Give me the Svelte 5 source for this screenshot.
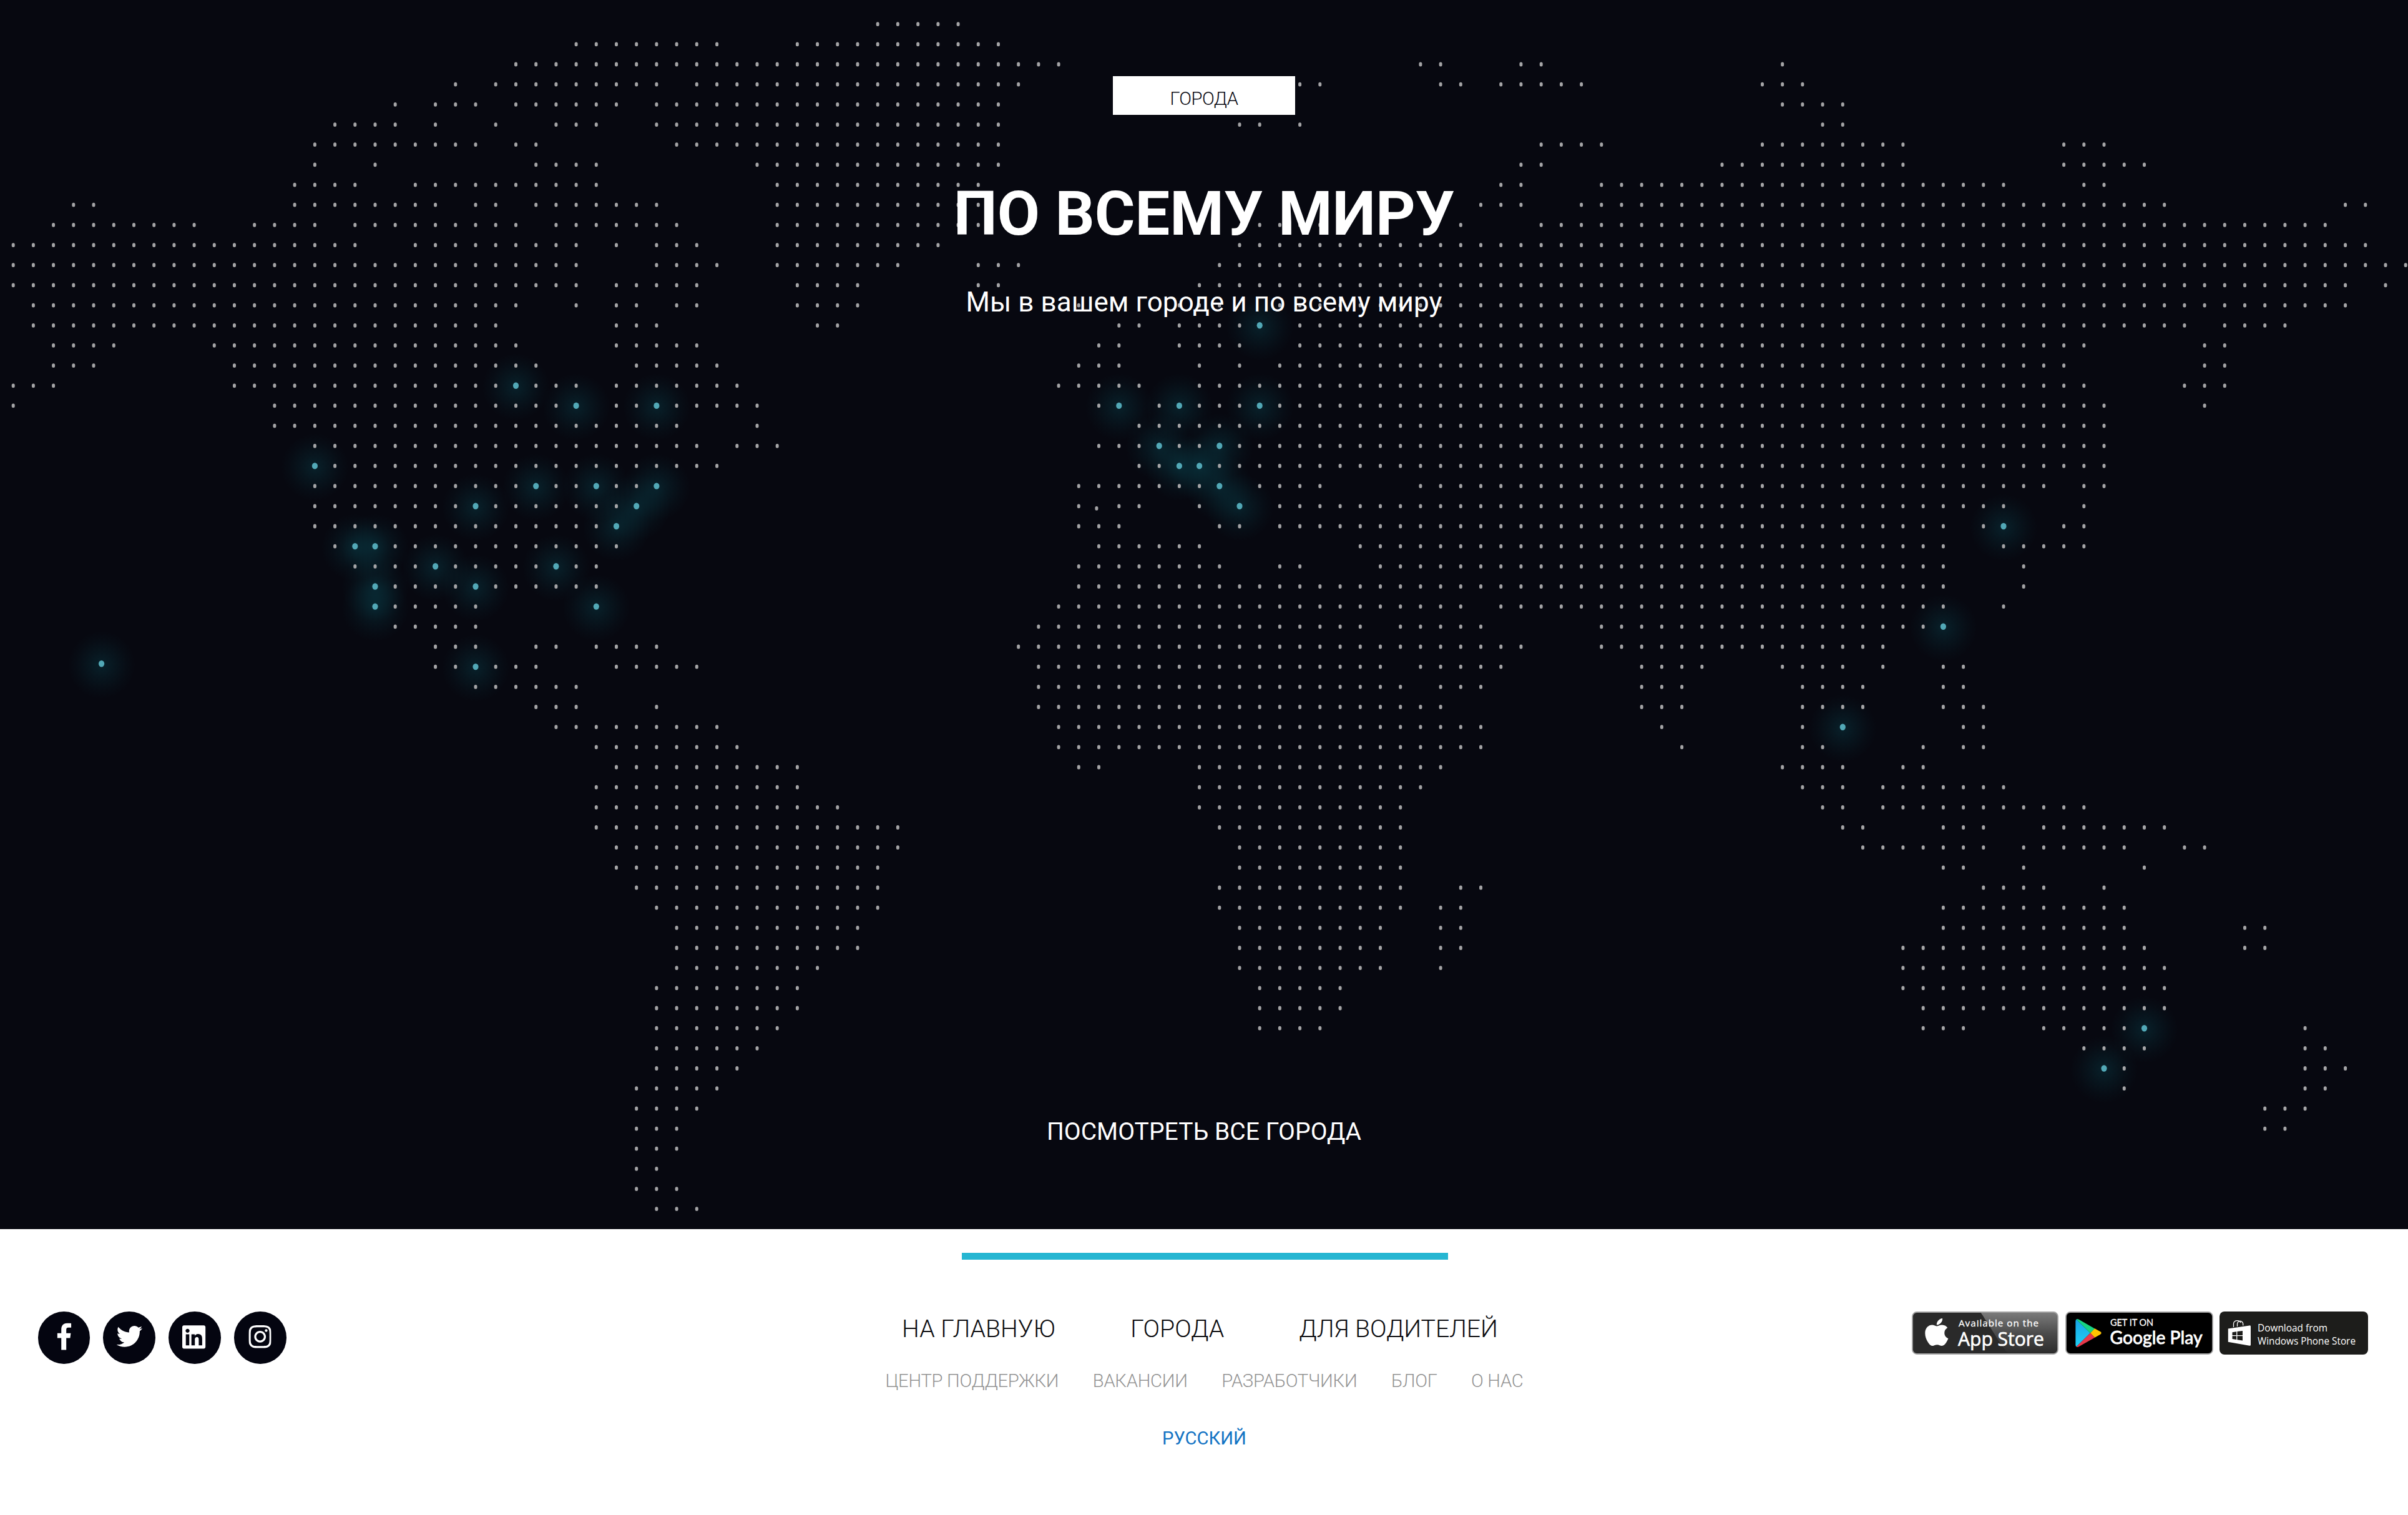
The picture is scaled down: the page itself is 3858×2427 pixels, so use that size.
<script>
  // Columns occupied by a dot in each row of the map grid, as inclusive runs.
  const rows = [
    '43-47',
    '28-35 39-49',
    '25-52 70-71 75-76 88',
    '22 24-32 34-50 64-65 71-72 74-78 87-89',
    '19 21-23 25-30 32-49 88-91',
    '16-19 21 24 27-29 32-49 61-62 64 90-91',
    '15-23 25-26 33-49 76-79 87-94 102-104',
    '15 18 26-29 37-49 75-76 85-94 102-106',
    '14-17 20-29 38-48 74-75 79-99 103-104',
    '3-4 14-21 23-24 26-32 38-48 73-75 78-107 116-117',
    '2-9 12-15 17-25 27-33 38-48 62-65 72 76-115',
    '0-17 20-28 30 32-34 38-46 61-117',
    '0-28 32-35 38-44 48-50 60-119',
    '0-28 30-34 39-42 48-49 59-116 118',
    '1-25 28 30-31 33-34 39-42 53 58-60 63-116',
    '1-24 30-32 40-41 55-56 58-61 64-108 110-113',
    '2-5 10-25 30-34 54-55 58-61 64-103 109-110',
    '2-4 11-26 31-35 53-55 59 61 63-102 109-110',
    '0-2 11-28 30-36 52-56 59-103 108-110',
    '0 13-28 30-37 54-55 57-104 109',
    '13-33 37 56-104',
    '15-34 36-38 54-104',
    '15-35 56-104',
    '15-32 53-60 62-65 70-101 103-104',
    '15-31 53 55-56 59 61 63-99 103',
    '15-30 53-55 60-61 63-96 98-99 102-103',
    '16-30 54-59 67-96 99-103',
    '17-29 53-60 63-64 68-96 100',
    '18-29 53-96 100',
    '18-23 29 52-72 74-96 99',
    '19-23 51-67 69-73 79-96',
    '21-23 26-27 29-32 50-75 79-93',
    '21-26 30-34 51-68 70-74 81-84 88-91 93 96-97',
    '23-28 51-69 71-73 81-83 89-92 96-97',
    '26-28 32 51-71 81-83 89-92 96-98',
    '27-35 52-73 82 89 91 97-98',
    '29-36 52-73 83 89-90 95 97-98',
    '30-39 53-54 59-71 88-91 94-95',
    '29-39 59-70 89-91 93-99',
    '29-41 59-69 90-91 93-103',
    '29-46 60-69 91-92 96-98 101-107',
    '30-46 61-69 92-98 100-105 108-109',
    '30-43 61-69 96-97 100 106',
    '31-43 60-69 72-73 98-101 104',
    '32-43 60-69 71-72 96-105',
    '33-42 61-68 71-72 96-105 111-112',
    '33-42 61-68 71-72 94-106 111-112',
    '33-40 61-68 71 94-107',
    '32-39 62-66 94-107',
    '32-39 62-66 95-107',
    '32-38 62-65 95-97 101-106 114',
    '32-37 103-106 114-115',
    '32-36 104-105 114-116',
    '31-35 105 114-115',
    '31-34 112-114',
    '31-33 112-113',
    '31-33',
    '31-32',
    '31-33',
    '32-34',
  ].map((line, r) => (r === 40 || r === 41 ? line.replace('-46', '-44') : line));

  // Cities that are lit up: [column, row].
  const cities = [
    [62, 15], [25, 18], [28, 19], [32, 19], [55, 19], [58, 19], [62, 19],
    [57, 21], [60, 21], [15, 22], [58, 22], [59, 22], [26, 23], [29, 23],
    [32, 23], [60, 23], [23, 24], [31, 24], [61, 24], [30, 25], [99, 25],
    [17, 26], [18, 26], [21, 27], [27, 27], [18, 28], [23, 28], [18, 29],
    [29, 29], [96, 30], [23, 32], [91, 35], [106, 50], [104, 52],
  ];

  const px = (c) => +(21.2 + c * 32.21).toFixed(1);
  const py = (r) => +(38.7 + r * 32.17).toFixed(1);
  const lit = new Set(cities.map(([c, r]) => `${c},${r}`));

  const dots = [[1756.9, 814.3]];
  rows.forEach((line, r) => {
    for (const run of line.split(' ')) {
      const [a, b = a] = run.split('-').map(Number);
      for (let c = a; c <= b; c++) {
        if (!lit.has(`${c},${r}`)) dots.push([px(c), py(r)]);
      }
    }
  });
  const dotPath = dots.map(([x, y]) => `M${x} ${(y - 0.9).toFixed(1)}v1.8`).join('');
  const glows = [...cities.map(([c, r]) => [px(c), py(r)]), [162.6, 1063.2]];

  const social = [
    {
      name: 'Facebook', box: '0 0 264 512', w: 22.6, h: 43.4, dx: 0.6, dy: -1.4,
      d: 'M76.7 512V283H0v-91h76.7v-71.7C76.7 42.4 124.3 0 193.8 0c33.3 0 61.9 2.5 70.2 3.6V85h-48.2c-37.8 0-45.1 18-45.1 44.3V192H256l-11.7 91h-73.6v229',
    },
    {
      name: 'Twitter', box: '0 0 512 512', w: 41.5, h: 41.5, dx: 0.6, dy: -1.8,
      d: 'M459.37 151.716c.325 4.548.325 9.097.325 13.645 0 138.72-105.583 298.558-298.558 298.558-59.452 0-114.68-17.219-161.137-47.106 8.447.974 16.568 1.299 25.34 1.299 49.055 0 94.213-16.568 130.274-44.832-46.132-.975-84.792-31.188-98.112-72.772 6.498.974 12.995 1.624 19.818 1.624 9.421 0 18.843-1.3 27.614-3.573-48.081-9.747-84.143-51.98-84.143-102.985v-1.299c13.969 7.797 30.214 12.67 47.431 13.319-28.264-18.843-46.781-51.005-46.781-87.391 0-19.492 5.197-37.36 14.294-52.954 51.655 63.675 129.3 105.258 216.365 109.807-1.624-7.797-2.599-15.918-2.599-24.04 0-57.828 46.782-104.934 104.934-104.934 30.213 0 57.502 12.67 76.67 33.137 23.715-4.548 46.456-13.32 66.599-25.34-7.798 24.366-24.366 44.833-46.132 57.827 21.117-2.273 41.584-8.122 60.426-16.243-14.292 20.791-32.161 39.308-52.628 54.253z',
    },
    {
      name: 'LinkedIn', box: '0 0 448 512', w: 37.2, h: 42.5, dx: -1, dy: -1.3,
      d: 'M416 32H31.9C14.3 32 0 46.5 0 64.3v383.4C0 465.5 14.3 480 31.9 480H416c17.6 0 32-14.5 32-32.3V64.3c0-17.8-14.4-32.3-32-32.3zM135.4 416H69V202.2h66.5V416zm-33.2-243c-21.3 0-38.5-17.3-38.5-38.5S80.9 96 102.2 96c21.2 0 38.5 17.3 38.5 38.5 0 21.3-17.2 38.5-38.5 38.5zm282.1 243h-66.4V312c0-24.8-.5-56.7-34.5-56.7-34.6 0-39.9 27-39.9 54.9V416h-66.4V202.2h63.7v29.2h.9c8.9-16.8 30.6-34.5 62.9-34.5 67.2 0 79.7 44.3 79.7 101.9V416z',
    },
    {
      name: 'Instagram', box: '0 0 448 512', w: 36.6, h: 41.8, dx: -0.6, dy: -1.6,
      d: 'M224.1 141c-63.6 0-114.9 51.3-114.9 114.9s51.3 114.9 114.9 114.9S339 319.5 339 255.9 287.7 141 224.1 141zm0 189.6c-41.1 0-74.7-33.5-74.7-74.7s33.5-74.7 74.7-74.7 74.7 33.5 74.7 74.7-33.6 74.7-74.7 74.7zm146.4-194.3c0 14.9-12 26.8-26.8 26.8-14.9 0-26.8-12-26.8-26.8s12-26.8 26.8-26.8 26.8 12 26.8 26.8zm76.1 27.2c-1.7-35.9-9.9-67.7-36.2-93.9-26.2-26.2-58-34.4-93.9-36.2-37-2.1-147.9-2.1-184.9 0-35.8 1.7-67.6 9.9-93.9 36.1s-34.4 58-36.2 93.9c-2.1 37-2.1 147.9 0 184.9 1.7 35.9 9.9 67.7 36.2 93.9s58 34.4 93.9 36.2c37 2.1 147.9 2.1 184.9 0 35.9-1.7 67.7-9.9 93.9-36.2 26.2-26.2 34.4-58 36.2-93.9 2.1-37 2.1-147.8 0-184.8zM398.8 388c-7.8 19.6-22.9 34.7-42.6 42.6-29.5 11.7-99.5 9-132.1 9s-102.7 2.6-132.1-9c-19.6-7.8-34.7-22.9-42.6-42.6-11.7-29.5-9-99.5-9-132.1s-2.6-102.7 9-132.1c7.8-19.6 22.9-34.7 42.6-42.6 29.5-11.7 99.5-9 132.1-9s102.7-2.6 132.1 9c19.6 7.8 34.7 22.9 42.6 42.6 11.7 29.5 9 99.5 9 132.1s2.7 102.7-9 132.1z',
    },
  ];

  const mainNav = ['НА ГЛАВНУЮ', 'ГОРОДА', 'ДЛЯ ВОДИТЕЛЕЙ'];
  const subNav = ['ЦЕНТР ПОДДЕРЖКИ', 'ВАКАНСИИ', 'РАЗРАБОТЧИКИ', 'БЛОГ', 'О НАС'];
</script>

<section class="cities">
  <svg class="map" viewBox="0 0 3858 1969" aria-hidden="true">
    <defs>
      <radialGradient id="glow">
        <stop offset="0" stop-color="#0c98a8" stop-opacity=".17" />
        <stop offset=".4" stop-color="#0c98a8" stop-opacity=".09" />
        <stop offset=".75" stop-color="#0c98a8" stop-opacity=".03" />
        <stop offset="1" stop-color="#0c98a8" stop-opacity="0" />
      </radialGradient>
    </defs>
    {#each glows as [x, y]}
      <circle cx={x} cy={y + 2} r="54" fill="url(#glow)" />
    {/each}
    <path d={dotPath} class="dots" />
    {#each glows as [x, y]}
      <ellipse cx={x} cy={y} rx="4.6" ry="5.2" class="lit" />
    {/each}
  </svg>
  <div class="tag">ГОРОДА</div>
  <h1>ПО ВСЕМУ МИРУ</h1>
  <p>Мы в вашем городе и по всему миру</p>
  <a class="all">ПОСМОТРЕТЬ ВСЕ ГОРОДА</a>
</section>

<footer>
  <div class="bar"></div>
  <div class="columns">
    <div class="social">
      {#each social as s}
        <a class="round" aria-label={s.name}>
          <svg viewBox={s.box} width={s.w} height={s.h} style:translate="{s.dx}px {s.dy}px">
            <path d={s.d} fill="#fff" />
          </svg>
        </a>
      {/each}
    </div>

    <div class="links">
      <nav class="primary">
        {#each mainNav as item}<a>{item}</a>{/each}
      </nav>
      <nav class="secondary">
        {#each subNav as item}<a>{item}</a>{/each}
      </nav>
      <a class="lang">РУССКИЙ</a>
    </div>

    <div class="stores">
      <svg class="apple" viewBox="0 0 235 69" width="235" height="69">
        <defs>
          <linearGradient id="gloss" x1="0" y1="0" x2="0" y2="1">
            <stop offset="0" stop-color="#7c7c7c" />
            <stop offset=".5" stop-color="#4c4c4c" />
            <stop offset="1" stop-color="#2b2b2b" />
          </linearGradient>
        </defs>
        <rect x="1" y="1" width="233" height="67" rx="7" fill="#2a2a2a" />
        <path d="M110 1h117a7 7 0 0 1 7 7v53a7 7 0 0 1-7 7h-72c-8-8-17-23-27-39-9-14-13-21-18-28z" fill="url(#gloss)" />
        <rect x="1" y="1" width="233" height="67" rx="7" fill="none" stroke="#a3a3a3" stroke-width="1.8" />
        <path transform="translate(20.9 7.8) scale(.0985)" fill="#fff" d="M318.7 268.7c-.2-36.7 16.4-64.4 50-84.8-18.8-26.9-47.2-41.7-84.7-44.6-35.5-2.8-74.3 20.7-88.5 20.7-15 0-49.4-19.7-76.4-19.7C63.3 141.2 4 184.8 4 273.5q0 39.3 14.4 81.2c12.8 36.7 59 126.7 107.2 125.2 25.2-.6 43-17.9 75.8-17.9 31.8 0 48.3 17.9 76.4 17.9 48.6-.7 90.4-82.5 102.6-119.3-65.2-30.7-61.7-90-61.7-91.9zm-56.6-164.2c27.3-32.4 24.8-61.9 24-72.5-24.1 1.4-52 16.4-67.9 34.9-17.5 19.8-27.8 44.3-25.6 71.9 26.1 2 49.9-11.4 69.5-34.3z" />
        <text class="firm" x="75" y="23.7" font-size="15.2" textLength="128">Available on the</text>
        <text class="firmer" x="74" y="54.6" font-size="31.5" textLength="138" lengthAdjust="spacingAndGlyphs">App Store</text>
      </svg>

      <svg class="google" viewBox="0 0 237 69" width="237" height="69">
        <defs>
          <linearGradient id="blue" x1="0" y1="0" x2="0" y2="1">
            <stop offset="0" stop-color="#17a5e6" />
            <stop offset="1" stop-color="#1fd0f5" />
          </linearGradient>
        </defs>
        <rect x="1" y="1" width="235" height="67" rx="7" fill="#000" stroke="#a3a3a3" stroke-width="1.8" />
        <path d="M17.6 12.4 40 34.4 17.6 56.6q-1.2-1-1.2-3V15.4q0-2 1.2-3z" fill="url(#blue)" />
        <path d="M17.6 12.4q1.4-1 3.6.2L47.2 27.400 40 34.500z" fill="#16d383" />
        <path d="M47.2 27.300 56 32.300q3.400 2.200 0 4.400l-8.800 5L40 34.500z" fill="#ffc400" />
        <path d="M17.600 56.600q1.400 1 3.600-.2l26-14.700L40 34.500z" fill="#e7384a" />
        <text class="lato firm" x="72" y="22.900" font-size="14.500" textLength="69" lengthAdjust="spacingAndGlyphs">GET IT ON</text>
        <text class="lato bolder" x="71.500" y="51.700" font-size="29.500" textLength="148" lengthAdjust="spacingAndGlyphs">Google Play</text>
      </svg>

      <svg class="windows" viewBox="0 0 238 69" width="238" height="69">
        <rect width="238" height="69" rx="8" fill="#1d1d1b" />
        <path d="M22.500 25v-5.500a6 5.500 0 0 1 11.500-1.500M28.500 24v-3.500a4.600 4.600 0 0 1 9.200-1v3" fill="none" stroke="#fff" stroke-width="1.300" />
        <path d="M13.800 27.600 48 22.400q2-.3 2 1.600V53.200q0 2-2 1.600L13.800 48.800z" fill="#fff" />
        <path d="M20.500 33.200l6.600-.9v5.700h-6.600zM28.400 32.100l8.600-1.200V38h-8.600zM20.500 39.300h6.600V45l-6.600-.9zM28.400 39.300H37v7.200l-8.600-1.300z" fill="#1d1d1b" />
        <text x="61" y="32" font-size="16.600" textLength="112" lengthAdjust="spacingAndGlyphs">Download from</text>
        <text x="61" y="52.600" font-size="16.600" textLength="157" lengthAdjust="spacingAndGlyphs">Windows Phone Store</text>
      </svg>
    </div>
  </div>
</footer>

<style>
  :global(body) {
    background: #fff;
    font-family: Roboto, 'Liberation Sans', sans-serif;
  }

  .cities {
    position: relative;
    display: flex;
    flex-direction: column;
    align-items: center;
    box-sizing: border-box;
    height: 1969px;
    padding: 122px 0 126px;
    overflow: hidden;
    background: #070810;
    color: #fff;
  }
  .map {
    position: absolute;
    inset: 0;
    width: 100%;
    height: 100%;
  }
  .dots {
    fill: none;
    stroke: #a4a4a6;
    stroke-width: 5;
    stroke-linecap: round;
  }
  .lit { fill: #52a8b6; }

  .tag, h1, p, .all { position: relative; }
  .tag {
    box-sizing: border-box;
    width: 292px;
    height: 62px;
    padding-top: 10px;
    background: #fff;
    color: #0a0a12;
    font-size: 29.2px;
    font-weight: 300;
    letter-spacing: -0.5px;
    line-height: 52px;
    text-align: center;
  }
  h1 {
    margin: 108px 0 0;
    font-size: 99px;
    font-weight: 700;
    line-height: 100px;
  }
  p {
    margin: 62px 0 0;
    font-size: 44px;
    letter-spacing: 0.08px;
    line-height: 60px;
  }
  .all {
    margin-top: auto;
    font-size: 39.1px;
    line-height: 60px;
  }

  footer {
    padding: 38px 64px 0 60px;
  }
  .bar {
    width: 779px;
    height: 11px;
    margin: 0 auto;
    background: #26b6d2;
    translate: 3px 0;
  }
  .columns {
    display: grid;
    grid-template-columns: 1fr auto 1fr;
    align-items: start;
    margin-top: 83px;
  }

  .social {
    display: flex;
    gap: 21.400px;
    padding-left: 0.5px;
  }
  .round {
    display: flex;
    align-items: center;
    justify-content: center;
    width: 83.500px;
    height: 83.500px;
    border-radius: 50%;
    background: #040510;
  }

  .links {
    display: flex;
    flex-direction: column;
    align-items: center;
    padding: 3px 0 0 5px;
  }
  .primary {
    display: flex;
    gap: 120px;
    padding-right: 14px;
    color: #0c0c10;
    font-size: 39.200px;
    font-weight: 300;
    line-height: 50px;
  }
  .secondary {
    display: flex;
    gap: 54.500px;
    margin-top: 38px;
    color: #949494;
    font-size: 29.200px;
    font-weight: 300;
    letter-spacing: -0.28px;
    line-height: 40px;
  }
  .lang {
    margin-top: 52px;
    color: #1474c4;
    font-size: 29.200px;
    line-height: 40px;
  }

  .stores {
    display: flex;
    justify-content: flex-end;
    gap: 10.500px;
  }
  .stores text {
    fill: #fff;
    font-family: 'Open Sans', 'Noto Sans', sans-serif;
  }
  .stores .lato { font-family: Lato, sans-serif; }
  .stores .firm {
    stroke: #fff;
    stroke-width: 0.3;
  }
  .stores .firmer {
    stroke: #fff;
    stroke-width: 0.7;
  }
  .stores .bolder {
    stroke: #fff;
    stroke-width: 0.9;
  }
</style>
